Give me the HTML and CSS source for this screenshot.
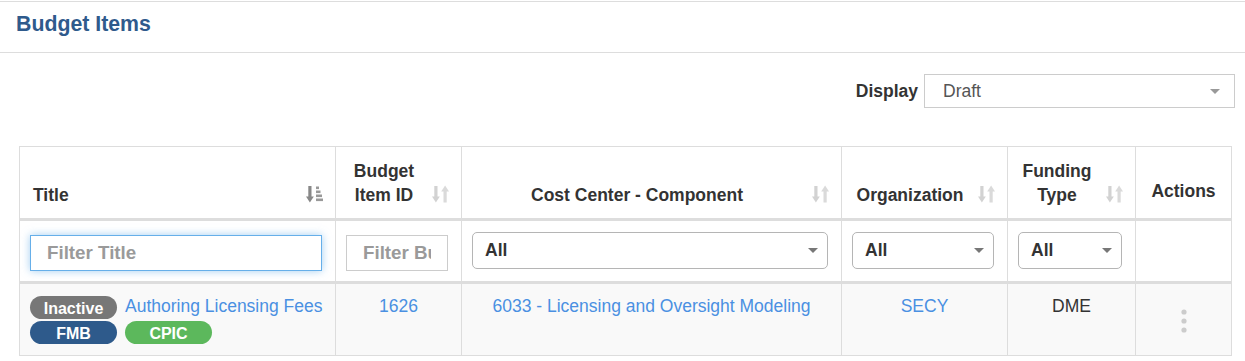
FILE: index.html
```html
<!DOCTYPE html>
<html lang="en">
<head>
  <meta charset="UTF-8">
  <title>Budget Items</title>
  <meta name="viewport" content="width=device-width,initial-scale=1">
  <link rel="stylesheet" href="styles.css">
</head>
<body>
  <div class="panel">
    <div class="panel-heading">
      <h2 class="panel-title">Budget Items</h2>
    </div>
    <div class="panel-body">
      <div class="toolbar">
        <label class="toolbar-label">Display</label>
        <div class="select select-square">
          <span>Draft</span>
          <svg class="caret" width="10" height="5" viewBox="0 0 10 5"><polygon points="0,0 10,0 5,5" fill="#999"/></svg>
        </div>
      </div>

      <table class="grid">
        <colgroup>
          <col style="width:316px">
          <col style="width:126px">
          <col style="width:380px">
          <col style="width:166px">
          <col style="width:128px">
          <col>
        </colgroup>
        <thead>
          <tr class="head-row">
            <th class="th-left">
              <div class="th-inner">
                <span class="th-label">Title</span>
                <svg class="sort-icon" viewBox="0 0 17 18">
                  <rect x="2.3" y="1" width="3.2" height="12" fill="#888"/>
                  <polygon points="0,11.5 7.8,11.5 3.9,17.5" fill="#888"/>
                  <rect x="10" y="1.5" width="3" height="2.6" fill="#999"/>
                  <rect x="10" y="5.5" width="4.5" height="2.6" fill="#999"/>
                  <rect x="10" y="9.5" width="6" height="2.6" fill="#999"/>
                  <rect x="10" y="13.5" width="7" height="2.6" fill="#999"/>
                </svg>
              </div>
            </th>
            <th>
              <div class="th-inner">
                <span class="th-label">Budget Item ID</span>
                <svg class="sort-icon" viewBox="0 0 17 18">
                  <rect x="2.3" y="1" width="3.2" height="12" fill="#d2d2d2"/>
                  <polygon points="0,11.5 7.8,11.5 3.9,17.5" fill="#d2d2d2"/>
                  <polygon points="9.2,6.5 17,6.5 13.1,0.5" fill="#dadada"/>
                  <rect x="11.5" y="5" width="3.2" height="12.5" fill="#dadada"/>
                </svg>
              </div>
            </th>
            <th>
              <div class="th-inner">
                <span class="th-label">Cost Center - Component</span>
                <svg class="sort-icon" viewBox="0 0 17 18">
                  <rect x="2.3" y="1" width="3.2" height="12" fill="#d2d2d2"/>
                  <polygon points="0,11.5 7.8,11.5 3.9,17.5" fill="#d2d2d2"/>
                  <polygon points="9.2,6.5 17,6.5 13.1,0.5" fill="#dadada"/>
                  <rect x="11.5" y="5" width="3.2" height="12.5" fill="#dadada"/>
                </svg>
              </div>
            </th>
            <th>
              <div class="th-inner">
                <span class="th-label">Organization</span>
                <svg class="sort-icon" viewBox="0 0 17 18">
                  <rect x="2.3" y="1" width="3.2" height="12" fill="#d2d2d2"/>
                  <polygon points="0,11.5 7.8,11.5 3.9,17.5" fill="#d2d2d2"/>
                  <polygon points="9.2,6.5 17,6.5 13.1,0.5" fill="#dadada"/>
                  <rect x="11.5" y="5" width="3.2" height="12.5" fill="#dadada"/>
                </svg>
              </div>
            </th>
            <th>
              <div class="th-inner">
                <span class="th-label">Funding Type</span>
                <svg class="sort-icon" viewBox="0 0 17 18">
                  <rect x="2.3" y="1" width="3.2" height="12" fill="#d2d2d2"/>
                  <polygon points="0,11.5 7.8,11.5 3.9,17.5" fill="#d2d2d2"/>
                  <polygon points="9.2,6.5 17,6.5 13.1,0.5" fill="#dadada"/>
                  <rect x="11.5" y="5" width="3.2" height="12.5" fill="#dadada"/>
                </svg>
              </div>
            </th>
            <th class="th-actions">Actions</th>
          </tr>
          <tr class="filter-row">
            <td><input class="filter-input is-focused" type="text" placeholder="Filter Title"></td>
            <td><input class="filter-input" type="text" placeholder="Filter Budget Item ID"></td>
            <td>
              <div class="select"><span>All</span><svg class="caret" width="10" height="5" viewBox="0 0 10 5"><polygon points="0,0 10,0 5,5" fill="#777"/></svg></div>
            </td>
            <td>
              <div class="select"><span>All</span><svg class="caret" width="10" height="5" viewBox="0 0 10 5"><polygon points="0,0 10,0 5,5" fill="#777"/></svg></div>
            </td>
            <td>
              <div class="select"><span>All</span><svg class="caret" width="10" height="5" viewBox="0 0 10 5"><polygon points="0,0 10,0 5,5" fill="#777"/></svg></div>
            </td>
            <td></td>
          </tr>
        </thead>
        <tbody>
          <tr class="data-row">
            <td class="td-title">
              <div class="badge-line">
                <span class="badge badge-inactive">Inactive</span>
                <a class="title-link" href="#">Authoring Licensing Fees</a>
              </div>
              <div class="badge-line">
                <span class="badge badge-fmb">FMB</span>
                <span class="badge badge-cpic">CPIC</span>
              </div>
            </td>
            <td><a href="#">1626</a></td>
            <td><a href="#">6033 - Licensing and Oversight Modeling</a></td>
            <td><a href="#">SECY</a></td>
            <td>DME</td>
            <td class="td-actions">
              <svg class="kebab" width="6" height="24" viewBox="0 0 6 24">
                <circle cx="3" cy="3" r="2.6" fill="#ccc"/>
                <circle cx="3" cy="12" r="2.6" fill="#ccc"/>
                <circle cx="3" cy="21" r="2.6" fill="#ccc"/>
              </svg>
            </td>
          </tr>
        </tbody>
      </table>
    </div>
  </div>
</body>
</html>
```

FILE: styles.css
```css
body {
  margin: 0;
  font-family: "Liberation Sans", Arial, sans-serif;
  font-size: 17.5px;
  color: #333;
  background: #fff;
}

.panel { margin-top: 1px; border-top: 1px solid #ddd; }
.panel-heading { padding: 9px 16px 15px; border-bottom: 1px solid #ddd; }
.panel-title {
  margin: 0;
  font-size: 21.3px; line-height: 26px;
  font-weight: bold; color: #2f5a8c;
}
.panel-body { padding: 21px 13px 0 19px; }

.toolbar {
  display: flex; justify-content: flex-end; align-items: center;
  gap: 6px; margin-right: -3px; margin-bottom: 38px;
}
.toolbar-label { font-weight: bold; color: #333; }

.select {
  display: flex; align-items: center; justify-content: space-between;
  box-sizing: border-box; height: 37px;
  padding: 0 9px 0 12px;
  border: 1px solid #b5b5b5; border-radius: 5px;
  font-weight: bold; color: #333;
}
.select-square {
  width: 311px; height: 34px;
  padding: 0 14px 0 18px;
  border-color: #ccc; border-radius: 0;
  font-weight: normal; color: #555;
}

/* table */
.grid { width: 100%; table-layout: fixed; border-collapse: collapse; }
.grid th, .grid td { border: 1px solid #ddd; }

.head-row th {
  padding: 12px 12px 11px;
  vertical-align: bottom; text-align: center;
  line-height: 24px; font-weight: bold; color: #333;
  border-bottom: 3px solid #ddd;
}
.th-inner { display: flex; align-items: flex-end; gap: 12px; }
.th-label { flex: 1; }
.th-left .th-label { text-align: left; padding-left: 1px; }
.sort-icon { flex: none; width: 17px; height: 18px; margin-bottom: 4px; }
.head-row .th-actions { padding-bottom: 15px; }

.filter-row td {
  padding: 11px 13px 10px 10px;
  vertical-align: top;
  border-bottom: 3px solid #ddd;
}
.filter-input {
  display: block; box-sizing: border-box;
  width: 100%; height: 36px; margin: 3px 0 0;
  padding: 0 16px;
  border: 1px solid #ccc; border-radius: 0;
  font-family: "Liberation Sans", Arial, sans-serif;
  font-size: 18.75px; font-weight: bold; color: #555;
}
.filter-input::placeholder { color: #9a9a9a; }
.is-focused {
  border-color: #66afe9; outline: none;
  box-shadow: 0 0 8px rgba(102, 175, 233, 0.6);
}

.data-row td {
  padding: 12px 12px 11px;
  vertical-align: top; text-align: center;
  line-height: 20px;
  background: #f9f9f9;
}
.data-row .td-title { text-align: left; padding-left: 10px; padding-right: 8px; }
.data-row .td-actions { vertical-align: middle; padding-top: 14px; }
a { color: #4a90e2; text-decoration: none; }
.title-link { white-space: nowrap; }

.badge-line { display: flex; align-items: flex-start; gap: 8px; }
.badge-line + .badge-line { margin-top: 2px; }
.badge {
  flex: none; box-sizing: border-box;
  width: 87px; height: 23px; padding-top: 2px;
  border-radius: 12px;
  font-size: 16px; line-height: 21px; font-weight: bold;
  text-align: center; color: #fff;
}
.badge-inactive { background: #777; }
.badge-fmb { background: #2e5a8b; }
.badge-cpic { background: #5cb85c; }
.kebab { display: block; margin: 0 auto; }
```
